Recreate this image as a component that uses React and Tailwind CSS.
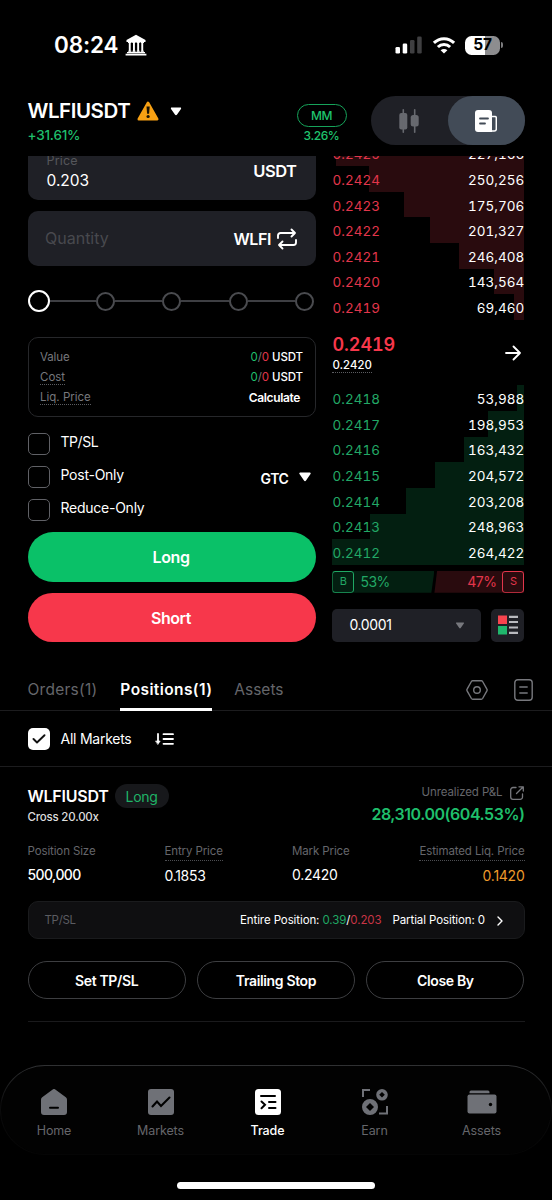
import React from "react";

const asks = [
  { price: "0.2425", size: "227,166", bar: "w-[188px]" },
  { price: "0.2424", size: "250,256", bar: "w-[155.500px]" },
  { price: "0.2423", size: "175,706", bar: "w-[120px]" },
  { price: "0.2422", size: "201,327", bar: "w-[94px]" },
  { price: "0.2421", size: "246,408", bar: "w-[65.500px]" },
  { price: "0.2420", size: "143,564", bar: "w-[30px]" },
  { price: "0.2419", size: "69,460", bar: "w-[10px]" },
];

const bids = [
  { price: "0.2418", size: "53,988", bar: "w-[7px]" },
  { price: "0.2417", size: "198,953", bar: "w-[36px]" },
  { price: "0.2416", size: "163,432", bar: "w-[60px]" },
  { price: "0.2415", size: "204,572", bar: "w-[89px]" },
  { price: "0.2414", size: "203,208", bar: "w-[118px]" },
  { price: "0.2413", size: "248,963", bar: "w-[154px]" },
  { price: "0.2412", size: "264,422", bar: "w-[192px]" },
];

function Triangle({ className }) {
  return (
    <svg viewBox="0 0 12 10" className={className} fill="currentColor">
      <path d="M1.2 0.6h9.6c.8 0 1.2.8.7 1.5L7 8.6c-.5.7-1.500.7-2 0L.5 2.100C0 1.400.4.6 1.200.6z" />
    </svg>
  );
}

function StatusBar() {
  return (
    <div className="flex h-[90px] items-center pl-[54px] pr-[49px] text-white">
      <span className="text-[22.500px] font-semibold leading-none tracking-[-0.150px]">08:24</span>
      <svg viewBox="0 0 22 22" className="ml-[7px] size-[22px]" fill="currentColor">
        <path d="M11 .8 20.500 6v2h-19V6zM3 8h3.600v1H3zM7.200 8h3.400v1H7.200zM11.400 8h3.400v1h-3.400zM15.600 8h3.400v1h-3.400z" />
        <path d="M3.800 9h1.900v8.500H3.800zM8 9h1.900v8.500H8zM12.200 9h1.900v8.500h-1.900zM16.300 9h1.900v8.500h-1.900z" />
        <path d="M3.200 16.800h3.200v1H3.200zM7.400 16.800h3.200v1H7.400zM11.600 16.800h3.200v1h-3.200zM15.700 16.800h3.200v1h-3.200zM2 18h18v1.200H2zM.6 19.800h20.800v1.600H.6z" />
      </svg>
      <div className="ml-auto flex items-center">
        <svg viewBox="0 0 28 18" className="h-[18px] w-[28px]">
          <rect x="0.500" y="11" width="4.500" height="6.500" rx="1.300" fill="#fff" />
          <rect x="7.700" y="7.500" width="4.500" height="10" rx="1.300" fill="#fff" />
          <rect x="15" y="4" width="4.500" height="13.500" rx="1.300" fill="#3f3f41" />
          <rect x="22.200" y="0.500" width="4.500" height="17" rx="1.300" fill="#3f3f41" />
        </svg>
        <svg viewBox="0 0 24 18" className="ml-[9px] h-[18px] w-[24px]" fill="none" stroke="#fff" strokeWidth="3">
          <path d="M1.900 6.900C7.500 1.200 16.500 1.200 22.100 6.900" />
          <path d="M5.900 11c3.400-3.400 8.800-3.400 12.200 0" />
          <path d="M12 17.600 8.600 14.200c1.900-1.700 4.900-1.700 6.800 0z" fill="#fff" stroke="none" />
        </svg>
        <div className="ml-[9px] flex h-[19px] w-[35px] items-center justify-center rounded-[6.500px] bg-[linear-gradient(90deg,#fff_57%,#8d8d8f_57%)] text-[15.500px] font-bold leading-none tracking-[-0.300px] text-black">
          <span>57</span>
        </div>
        <div className="ml-[1px] h-[6px] w-[2px] rounded-r-full bg-[#7c7c7e]" />
      </div>
    </div>
  );
}

function Header() {
  return (
    <div className="flex h-[66px] pl-[27.500px] pr-[27.500px]">
      <div className="pt-[10px]">
        <div className="flex h-[22px] items-center text-white">
          <span className="text-[20.500px] font-semibold leading-none tracking-[-0.450px]">WLFIUSDT</span>
          <svg viewBox="0 0 22 20" className="ml-[7px] h-[20px] w-[22px]">
            <path d="M11 1.700 20.300 18.200H1.700z" fill="#f7a013" stroke="#f7a013" strokeWidth="2.400" strokeLinejoin="round" />
            <path d="M9.500 5.600h3.200l-.6 7.200h-2z" fill="#1a1203" />
            <circle cx="11.100" cy="15.500" r="1.600" fill="#1a1203" />
          </svg>
          <Triangle className="ml-[10.500px] h-[9px] w-[12px]" />
        </div>
        <div className="flex h-[28px] items-center text-[13.500px] font-medium leading-none tracking-[-0.200px] text-[#1fbf6c]">+31.61%</div>
      </div>
      <div className="ml-auto flex w-[51px] flex-col items-center pt-[14px] text-[#1fc46e]">
        <div className="flex h-[23px] w-[50px] items-center justify-center rounded-full border border-[#16a35a] text-[12px] font-medium leading-none tracking-[-0.500px]">MM</div>
        <div className="flex h-[18px] items-center text-[12px] font-medium leading-none tracking-[-0.400px]">3.26%</div>
      </div>
      <div className="ml-[23.500px] mt-[6px] flex h-[49px] w-[154px] rounded-full bg-[#1f2026]">
        <div className="flex flex-1 items-center justify-center">
          <svg viewBox="0 0 20 24" className="h-[24px] w-[20px]" fill="#67696f">
            <rect x="0.300" y="4" width="8" height="16.500" rx="2" />
            <rect x="3.500" y="0" width="1.600" height="24" rx=".8" />
            <rect x="11.700" y="6" width="8" height="11.500" rx="2.500" />
            <rect x="14.900" y="0" width="1.600" height="24" rx=".8" />
          </svg>
        </div>
        <div className="flex w-[77px] items-center justify-center rounded-full bg-[#424b57]">
          <svg viewBox="0 0 22 22" className="h-[22px] w-[22px]">
            <path d="M3 0h11a3 3 0 0 1 3 3v19H3a3 3 0 0 1-3-3V3a3 3 0 0 1 3-3z" fill="#fff" />
            <path d="M16 6.500h4a1.300 1.300 0 0 1 1.300 1.300V19a2 2 0 0 1-2 2H16z" fill="#424b57" stroke="#fff" strokeWidth="1.500" />
            <path d="M16.300 5v16" stroke="#fff" strokeWidth="1.400" />
            <path d="M5 8.500h8M5 13.500h5" stroke="#424b57" strokeWidth="1.800" strokeLinecap="round" />
          </svg>
        </div>
      </div>
    </div>
  );
}

function Slider() {
  return (
    <div className="mr-[1px] flex h-[22px] items-center">
      <div className="size-[22px] shrink-0 rounded-full border-2 border-white" />
      {["w-[46px]", "w-[47.600px]", "w-[47.600px]", "w-[47.600px]"].map((w, i) => (
        <React.Fragment key={i}>
          <div className={`h-[2.500px] ${w} bg-[#3e3f43]`} />
          <div className="size-[19px] shrink-0 rounded-full border-2 border-[#4a4b4f]" />
        </React.Fragment>
      ))}
    </div>
  );
}

function CheckRow({ label, tracking }) {
  return (
    <div className="flex h-[33px] items-start">
      <div className="size-[22px] rounded-[5px] border border-[#606166]" />
      <span className={`ml-[11px] text-[14px] leading-[18px] text-white ${tracking}`}>{label}</span>
    </div>
  );
}

function OrderForm() {
  return (
    <div className="w-[288px]">
      <div className="-mt-[10px] flex h-[54px] rounded-[10px] bg-[#1f2026] pl-[19px] pr-[19px]">
        <div className="flex-1">
          <div className="mt-[8px] text-[12.500px] leading-[13px] tracking-[0.200px] text-[#55565b]">Price</div>
          <div className="mt-[4px] text-[15.500px] leading-[19px] tracking-[0px] text-white">0.203</div>
        </div>
        <div className="flex h-[50px] items-center text-[16.500px] font-semibold tracking-[-0.500px] text-white">USDT</div>
      </div>
      <div className="mt-[11px] flex h-[55px] items-center rounded-[10px] bg-[#1f2026] pl-[17.500px] pr-[18.500px]">
        <span className="-mt-[2px] text-[16px] leading-none text-[#48494e]">Quantity</span>
        <span className="ml-auto text-[16px] font-semibold leading-none tracking-[-0.400px] text-white">WLFI</span>
        <svg viewBox="0 0 20 22" className="ml-[6px] h-[22px] w-[20px]" fill="none" stroke="#fff" strokeWidth="1.900" strokeLinecap="round" strokeLinejoin="round">
          <path d="M1 10V7.500A2.500 2.500 0 0 1 3.500 5H18M14.500 1.500 18 5l-3.500 3.500" />
          <path d="M19 12v2.500A2.500 2.500 0 0 1 16.500 17H2M5.500 13.500 2 17l3.500 3.500" />
        </svg>
      </div>
      <div className="mt-[24px]"><Slider /></div>
      <div className="mt-[25px] h-[80px] rounded-[10px] border border-[#26272a] px-[11.500px] pt-[9.500px] text-[11.500px] text-[#77787d]">
        <div className="flex h-[20px] items-center justify-between">
          <span className="tracking-[-0.100px]">Value</span>
          <span className="tracking-[-0.100px]"><b className="font-normal text-[#1fbf6c]">0</b>/<b className="font-normal text-[#e2364b]">0</b> <b className="font-medium text-white">USDT</b></span>
        </div>
        <div className="flex h-[20px] items-center justify-between">
          <span className="-mt-[1px] border-b border-dotted border-[#5b5c61] leading-[14px]">Cost</span>
          <span className="tracking-[-0.100px]"><b className="font-normal text-[#1fbf6c]">0</b>/<b className="font-normal text-[#e2364b]">0</b> <b className="font-medium text-white">USDT</b></span>
        </div>
        <div className="flex h-[21px] items-center justify-between">
          <span className="-mt-[1px] border-b border-dotted border-[#5b5c61] leading-[14px]">Liq. Price</span>
          <span className="pr-[3px] text-[12px] font-semibold tracking-[-0.350px] text-white">Calculate</span>
        </div>
      </div>
      <div className="mt-[16px] flex">
        <div>
          <CheckRow label="TP/SL" tracking="tracking-[-0.450px]" />
          <CheckRow label="Post-Only" tracking="tracking-[-0.250px]" />
          <CheckRow label="Reduce-Only" tracking="tracking-[-0.250px]" />
        </div>
        <div className="ml-auto mr-[5px] flex h-[90px] items-center text-white">
          <span className="text-[14px] font-semibold tracking-[-0.400px]">GTC</span>
          <Triangle className="ml-[10px] -mt-[2px] h-[10px] w-[12px]" />
        </div>
      </div>
      <div className="flex h-[50px] items-center justify-center rounded-full bg-[#0ac168] pr-[1px] text-[16px] font-semibold tracking-[-0.400px] text-white">Long</div>
      <div className="mt-[11px] flex h-[49px] items-center justify-center rounded-full bg-[#f7374b] pr-[1px] text-[16px] font-semibold tracking-[-0.400px] text-white">Short</div>
    </div>
  );
}

function BookRows({ rows, priceColor, barColor }) {
  return rows.map((r) => (
    <div key={r.price} className="grid h-[25.640px] grid-cols-1 grid-rows-1">
      <div className={`col-start-1 row-start-1 h-full justify-self-end ${r.bar} ${barColor}`} />
      <div className="col-start-1 row-start-1 flex items-center justify-between pt-[3.500px] text-[13.500px] leading-none tabular-nums">
        <span className={`tracking-[0.050px] ${priceColor}`}>{r.price}</span>
        <span className="tracking-[0.050px] text-white">{r.size}</span>
      </div>
    </div>
  ));
}

function OrderBook() {
  return (
    <div className="w-[192px]">
      <div className="-mt-[15.500px]">
        <BookRows rows={asks} priceColor="text-[#e2364b]" barColor="bg-[#290b0e]" />
      </div>
      <div className="flex h-[65.500px] items-center justify-between">
        <div className="pt-[1px]">
          <div className="text-[18px] font-semibold leading-[22px] tracking-[-0.050px] tabular-nums text-[#f7374b]">0.2419</div>
          <div className="mt-[2px] w-fit border-b border-dotted border-[#5b5c61] text-[11.500px] font-medium leading-[14px] tracking-[-0.150px] tabular-nums text-white">0.2420</div>
        </div>
        <svg viewBox="0 0 16 16" className="mr-[3px] size-[16px]" fill="none" stroke="#fff" strokeWidth="1.800" strokeLinecap="round" strokeLinejoin="round">
          <path d="M1 8h14M8.500 1.500 15 8l-6.500 6.500" />
        </svg>
      </div>
      <BookRows rows={bids} priceColor="text-[#22a866]" barColor="bg-[#031f11]" />
      <div className="mt-[6px] flex h-[22px] text-[14px] leading-none">
        <div className="flex w-[102px] items-center bg-[#031f11] text-[#22a866] [clip-path:polygon(0_0,100%_0,97%_100%,0_100%)]">
          <span className="flex size-[22px] items-center justify-center rounded-[3px] border border-[#1fa864] text-[11px]">B</span>
          <span className="ml-[6px] tracking-[-0.500px]">53%</span>
        </div>
        <div className="flex w-[90px] items-center justify-end bg-[#290b0e] text-[#e2364b] [clip-path:polygon(3%_0,100%_0,100%_100%,0_100%)]">
          <span className="mr-[6px] tracking-[-0.500px]">47%</span>
          <span className="flex size-[22px] items-center justify-center rounded-[3px] border border-[#e2364b] text-[11px]">S</span>
        </div>
      </div>
      <div className="mt-[16px] flex h-[33px] justify-between">
        <div className="flex w-[148.500px] items-center justify-between rounded-[5px] bg-[#1f2026] pl-[17px] pr-[16px]">
          <span className="text-[14px] leading-none tracking-[-0.350px] text-white">0.0001</span>
          <Triangle className="h-[7px] w-[10px] text-[#77787d]" />
        </div>
        <div className="flex w-[33px] items-center justify-center rounded-[5px] bg-[#1f2026]">
          <svg viewBox="0 0 20 20" className="size-[20px]">
            <rect x="0" y="0.500" width="9" height="8.500" fill="#f7444e" />
            <rect x="0" y="11" width="9" height="8.500" fill="#1fb76c" />
            <path d="M11 1.800h9M11 7h9M11 12.500h9M11 17.800h9" stroke="#b9babf" strokeWidth="2.200" />
          </svg>
        </div>
      </div>
    </div>
  );
}

function Tabs() {
  return (
    <div className="mt-[26px] flex h-[43px] border-b border-[#1c1c1e] pl-[27.500px] pr-[19px] text-[15.500px] text-[#65666b]">
      <div className="flex h-[43px] items-center tracking-[0.250px]">Orders(1)</div>
      <div className="ml-[23px] flex h-[43px] items-center border-b-[3px] border-white pt-[3px] font-semibold tracking-[0.400px] text-white">Positions(1)</div>
      <div className="ml-[22px] flex h-[43px] items-center">Assets</div>
      <div className="ml-auto flex h-[44px] items-center">
        <svg viewBox="0 0 22 20" className="h-[20px] w-[22px]" fill="none" stroke="#77787d" strokeWidth="1.400" strokeLinejoin="round">
          <path d="M6.700.8h8.600a1.500 1.500 0 0 1 1.300.7l4.300 7.700a1.500 1.500 0 0 1 0 1.600l-4.300 7.700a1.500 1.500 0 0 1-1.300.7H6.700a1.500 1.500 0 0 1-1.300-.7L1.100 10.800a1.500 1.500 0 0 1 0-1.600l4.300-7.700A1.500 1.500 0 0 1 6.700.8z" />
          <circle cx="11" cy="10" r="3.300" />
        </svg>
        <svg viewBox="0 0 19 22" className="ml-[26px] h-[22px] w-[19px]" fill="none" stroke="#77787d" strokeWidth="1.400" strokeLinecap="round">
          <rect x="0.800" y="0.700" width="17.400" height="20.600" rx="3" />
          <path d="M5.800 8h7.400M5.800 14h7.400" />
        </svg>
      </div>
    </div>
  );
}

function MarketFilter() {
  return (
    <div className="flex h-[56px] items-center border-b border-[#1c1c1e] pl-[27.500px]">
      <div className="flex size-[22px] items-center justify-center rounded-[5px] bg-white">
        <svg viewBox="0 0 14 10" className="h-[10px] w-[14px]" fill="none" stroke="#111" strokeWidth="1.900" strokeLinecap="round" strokeLinejoin="round">
          <path d="M1.500 5 5 8.500 12.500 1.200" />
        </svg>
      </div>
      <span className="ml-[11px] text-[14px] leading-none tracking-[-0.250px] text-white">All Markets</span>
      <svg viewBox="0 0 19 12" className="ml-[23.500px] h-[12px] w-[19px]" fill="none" stroke="#fff" strokeWidth="1.800" strokeLinecap="round">
        <path d="M3 1v8M8.500 1.200h9.500M8.500 6h9.500M8.500 10.800h9.500" />
        <path d="M.8 8h4.400L3 11.300z" fill="#fff" strokeWidth=".6" />
      </svg>
    </div>
  );
}

function Position() {
  return (
    <div className="mx-[27.500px] h-[255px] border-b border-[#1a1a1c] pt-[17px]">
      <div className="flex h-[42px] justify-between">
        <div>
          <div className="flex h-[24px] items-center">
            <span className="text-[16px] font-semibold leading-none tracking-[-0.250px] text-white">WLFIUSDT</span>
            <span className="ml-[6px] flex h-[24px] w-[54px] items-center justify-center rounded-full bg-[#17181b] text-[14px] tracking-[-0.350px] text-[#1fb468]">Long</span>
          </div>
          <div className="flex h-[19px] items-center pt-[1px] text-[11.500px] font-medium tracking-[-0.200px] text-[#dcdcdc]">Cross 20.00x</div>
        </div>
        <div className="flex flex-col items-end">
          <div className="flex h-[17px] items-center text-[11.500px] tracking-[-0.100px] text-[#65666b]">
            Unrealized P&amp;L
            <svg viewBox="0 0 14 14" className="ml-[7px] mr-[1px] size-[14px]" fill="none" stroke="#77787d" strokeWidth="1.300" strokeLinecap="round" strokeLinejoin="round">
              <path d="M6 1.500H3A2.300 2.300 0 0 0 .7 3.800V11A2.300 2.300 0 0 0 3 13.300h7.200a2.300 2.300 0 0 0 2.300-2.300V8M9 .8h4.300v4.300M13 1 6.500 7.500" />
            </svg>
          </div>
          <div className="flex h-[27px] items-center text-[16px] font-semibold tracking-[-0.470px] text-[#1fbf6c]">28,310.00(604.53%)</div>
        </div>
      </div>
      <div className="mt-[18px] flex h-[41px] text-[11.500px] leading-[14px] tracking-[-0.120px] text-[#65666b]">
        <div className="w-[137px]">
          <div>Position Size</div>
          <div className="mt-[8px] text-[14px] font-medium leading-[18px] tracking-[-0.580px] text-white">500,000</div>
        </div>
        <div className="w-[127.500px]">
          <div className="h-[17px] w-fit border-b border-dotted border-[#4d4e52]">Entry Price</div>
          <div className="mt-[6px] text-[14px] leading-[18px] tracking-[-0.300px] text-white">0.1853</div>
        </div>
        <div>
          <div>Mark Price</div>
          <div className="mt-[8px] text-[14px] leading-[18px] tracking-[-0.300px] text-white">0.2420</div>
        </div>
        <div className="ml-auto text-right">
          <div className="h-[17px] border-b border-dotted border-[#4d4e52]">Estimated Liq. Price</div>
          <div className="mt-[6px] text-[14px] leading-[18px] tracking-[-0.250px] text-[#ee9a2b]">0.1420</div>
        </div>
      </div>
      <div className="mt-[16px] flex h-[38px] items-center rounded-[10px] border border-[#1a1b1d] bg-[#0f0f11] pl-[16px] pr-[20px] pt-[2px] text-[11.500px] tracking-[-0.100px] text-white">
        <span className="tracking-[-0.300px] text-[#5b5c61]">TP/SL</span>
        <span className="ml-auto">Entire Position: <span className="text-[#1fa864]">0.39</span>/<span className="text-[#c93546]">0.203</span></span>
        <span className="ml-[11px]">Partial Position: 0</span>
        <svg viewBox="0 0 8 10" className="ml-[10.500px] h-[10px] w-[8px]" fill="none" stroke="#fff" strokeWidth="1.400" strokeLinecap="round" strokeLinejoin="round">
          <path d="M2 1l4 4-4 4" />
        </svg>
      </div>
      <div className="mt-[22px] flex gap-[11px] text-[14px] font-semibold tracking-[-0.350px] text-white">
        {["Set TP/SL", "Trailing Stop", "Close By"].map((t) => (
          <div key={t} className="flex h-[38px] flex-1 items-center justify-center rounded-full border border-[#3d3e41]">{t}</div>
        ))}
      </div>
    </div>
  );
}

const navItems = [
  {
    label: "Home",
    icon: (
      <svg viewBox="0 0 26 26" className="size-[26px]" fill="#6f7177">
        <path d="M11.700.5a2 2 0 0 1 2.600 0l10.500 7.800A3 3 0 0 1 26 10.700V23a3 3 0 0 1-3 3H3a3 3 0 0 1-3-3V10.700a3 3 0 0 1 1.200-2.400z" />
        <path d="M9 18.800h8" stroke="#000" strokeWidth="2" strokeLinecap="round" />
      </svg>
    ),
  },
  {
    label: "Markets",
    icon: (
      <svg viewBox="0 0 26 26" className="size-[26px]" fill="none">
        <rect width="26" height="26" rx="3" fill="#6f7177" />
        <path d="m4.500 17.500 4.500-5 4 4.500 8.500-8.500" stroke="#000" strokeWidth="2.100" strokeLinecap="round" />
      </svg>
    ),
  },
  {
    label: "Trade",
    active: true,
    icon: (
      <svg viewBox="0 0 26 26" className="size-[26px]" fill="none" stroke="#000" strokeWidth="2" strokeLinecap="round">
        <rect width="26" height="26" rx="3.500" fill="#fff" stroke="none" />
        <path d="M6 7h14M14 13h6.500M14 19h6.500M6.500 12.500 10 15.800l-3.500 3.400" />
      </svg>
    ),
  },
  {
    label: "Earn",
    icon: (
      <svg viewBox="0 0 26 26" className="size-[26px]" fill="#6f7177">
        <path d="M1 8V1h7M25 17v7.500h-8" fill="none" stroke="#6f7177" strokeWidth="2" />
        <path fillRule="evenodd" d="M20 0a5.800 5.800 0 1 1 0 11.600A5.800 5.800 0 0 1 20 0zm0 3-2.800 2.800L20 8.600l2.800-2.800z" />
        <path fillRule="evenodd" d="M8 10a8 8 0 1 1 0 16 8 8 0 0 1 0-16zm0 4-4 4 4 4 4-4z" />
      </svg>
    ),
  },
  {
    label: "Assets",
    icon: (
      <svg viewBox="0 0 30 26" className="h-[26px] w-[30px]" fill="#6f7177">
        <path d="M4 1.500h17a1.500 1.500 0 0 1 1.500 1.500v1.200H2.500V3A1.500 1.500 0 0 1 4 1.500z" />
        <rect x="0.500" y="5.500" width="29" height="19" rx="2" />
        <circle cx="23.500" cy="15.500" r="1.700" fill="#000" />
      </svg>
    ),
  },
];

function BottomNav() {
  return (
    <div className="mt-[43px] rounded-[45px] bg-[linear-gradient(180deg,#303133,#0b0b0c_45%,#050505)] p-px">
      <div className="flex h-[88px] rounded-[44px] bg-[#020202] pt-[23px]">
        {navItems.map((n) => (
          <div key={n.label} className="flex w-[107px] flex-col items-center first:w-[106px]">
            {n.icon}
            <span className={`mt-[9px] text-[12.500px] leading-[14px] tracking-[-0.100px] ${n.active ? "font-medium text-white" : "text-[#65666b]"}`}>{n.label}</span>
          </div>
        ))}
      </div>
    </div>
  );
}

export default function App() {
  return (
    <div className="flex h-[1200px] w-[552px] flex-col overflow-hidden bg-black font-[Inter,'Liberation_Sans',sans-serif]">
      <StatusBar />
      <Header />
      <div className="flex h-[486px] justify-between overflow-hidden pl-[27.500px] pr-[27.600px]">
        <OrderForm />
        <OrderBook />
      </div>
      <Tabs />
      <MarketFilter />
      <Position />
      <BottomNav />
      <div className="mx-auto mt-[27px] h-[7px] w-[198px] rounded-full bg-white" />
    </div>
  );
}
